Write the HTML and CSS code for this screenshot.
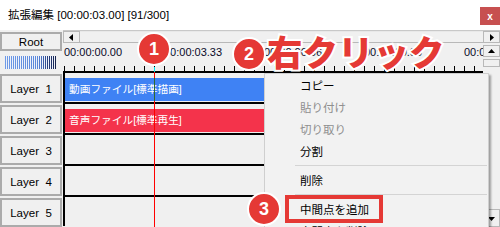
FILE: index.html
```html
<!DOCTYPE html>
<html lang="ja">
<head>
<meta charset="utf-8">
<title>拡張編集</title>
<link rel="stylesheet" href="styles.css">
</head>
<body>
<div class="win">
  <div class="titlebar">
    <span class="title">拡張編集 [00:00:03.00] [91/300]</span>
    <span class="close">x</span>
  </div>
  <div class="main">
    <div class="side">
      <div class="btn root">Root</div>
      <div class="vol"></div>
      <div class="btn layer">Layer&nbsp; 1</div>
      <div class="btn layer">Layer&nbsp; 2</div>
      <div class="btn layer">Layer&nbsp; 3</div>
      <div class="btn layer">Layer&nbsp; 4</div>
      <div class="btn layer">Layer&nbsp; 5</div>
    </div>
    <div class="tl">
      <div class="hscroll">
        <div class="sbtn"><svg width="5" height="7" viewBox="0 0 5 7"><polygon points="4,0 4,7 0,3.5" fill="#000"/></svg></div>
        <div class="hthumb"></div>
        <div class="sbtn"><svg width="5" height="7" viewBox="0 0 5 7"><polygon points="1,0 1,7 5,3.5" fill="#000"/></svg></div>
      </div>
      <div class="tlbody">
        <div class="tracks">
          <div class="ruler">
            <div class="labels">
              <span>00:00:00.00</span><span>00:00:03.33</span><span>00:00:06.66</span><span>00:00:10.00</span><span>00:00:13.33</span>
            </div>
            <div class="ticks"></div>
          </div>
          <div class="row"><div class="clip blue">動画ファイル[標準描画]</div></div>
          <div class="row"><div class="clip red">音声ファイル[標準再生]</div></div>
          <div class="row"></div>
          <div class="row"></div>
          <div class="row"></div>
        </div>
        <div class="vscroll">
          <div class="vbtn up"><svg width="7" height="5" viewBox="0 0 7 5"><polygon points="0,4 7,4 3.5,0" fill="#000"/></svg></div>
          <div class="vthumb"></div>
          <div class="vtrack"></div>
          <div class="vbtn down"><svg width="7" height="5" viewBox="0 0 7 5"><polygon points="0,1 7,1 3.5,5" fill="#000"/></svg></div>
        </div>
      </div>
    </div>
  </div>

  <div class="cursor"></div>

  <div class="menu">
    <div class="item">コピー</div>
    <div class="item dis">貼り付け</div>
    <div class="item dis">切り取り</div>
    <div class="item">分割</div>
    <div class="sep"></div>
    <div class="item">削除</div>
    <div class="sep"></div>
    <div class="item">中間点を追加</div>
    <div class="item">中間点を削除</div>
  </div>

  <div class="hl"></div>
  <div class="big">右クリック</div>
  <div class="badge b1">1</div>
  <div class="badge b2">2</div>
  <div class="badge b3">3</div>
</div>
</body>
</html>
```
FILE: styles.css
```css
* { box-sizing: border-box; margin: 0; padding: 0; }
body {
  margin: 0;
  width: 500px;
  height: 227px;
  overflow: hidden;
  background: #fff;
  font-family: "Liberation Sans", "Noto Sans CJK JP", sans-serif;
  font-size: 11px;
  color: #000;
}
.win { position: relative; width: 500px; height: 227px; overflow: hidden; }

.titlebar {
  height: 30px;
  display: flex;
  justify-content: space-between;
  align-items: flex-start;
  background: #fff;
}
.title { padding-left: 8px; line-height: 30px; font-size: 11.5px; }
.close {
  width: 20px; height: 18px; margin-top: 7px;
  background: #c75050; color: #fff;
  font-size: 10px; font-weight: bold;
  display: flex; align-items: center; justify-content: center;
}

.main { display: flex; height: 197px; background: #f0f0f0; }

.side { width: 63px; padding-top: 2px; display: flex; flex-direction: column; }
.btn {
  width: 62px;
  background: #f0f0f0;
  border: 2px solid #ababab;
  display: flex; align-items: center; justify-content: center;
  white-space: nowrap;
  font-size: 11.5px;
}
.root { height: 19px; }
.vol {
  margin: 5px 0 0 5px;
  width: 51px; height: 13px;
  background:
    repeating-linear-gradient(90deg, transparent 0 1px, #eef2fa 1px 2px),
    linear-gradient(90deg, #6f9ae6 0%, #5a86d8 65%, #2a4488 82%, #16224a 100%);
}
.layer { height: 29px; margin-top: 2px; }
.vol + .layer { margin-top: 5px; }

.tl { flex: 1; display: flex; flex-direction: column; min-width: 0; }
.hscroll { height: 13px; display: flex; border-top: 1px solid #c8c8c8; }
.sbtn {
  width: 17px; height: 12px;
  border: 1px solid #b8b8b8;
  background: #f0f0f0;
  display: flex; align-items: center; justify-content: center;
}
.hthumb { flex: 1; border-bottom: 1px solid #b8b8b8; border-top: 1px solid #e8e8e8; }

.tlbody { flex: 1; display: flex; min-height: 0; }
.tracks { flex: 1; min-width: 0; overflow: hidden; }
.ruler { height: 28px; display: flex; flex-direction: column; justify-content: space-between; overflow: hidden; }
.labels { display: flex; padding-left: 1px; padding-top: 3px; line-height: 13px; font-size: 11px; color: #0a0a28; white-space: nowrap; }
.labels span { flex: 0 0 100px; }
.ticks {
  height: 5px;
  margin-left: 1px;
  background: repeating-linear-gradient(90deg, #000 0 1px, transparent 1px 10px);
}
.row { height: 31px; border-top: 2px solid #000; border-left: 2px solid #000; }
.clip {
  margin-top: 5px; height: 23px; width: 220px;
  padding-left: 4px;
  line-height: 23px;
  color: #fff;
  font-size: 10.7px;
  white-space: nowrap;
}
.blue { background: #3f82f4; }
.red { background: #f4334b; }

.vscroll { width: 17px; display: flex; flex-direction: column; }
.vbtn {
  height: 12px;
  border: 1px solid #b8b8b8;
  background: #f0f0f0;
  display: flex; align-items: center; justify-content: center;
}
.up { margin-top: 2px; }
.vthumb { height: 8px; margin-top: 2px; border: 1px solid #b8b8b8; }
.vtrack { flex: 1; }
.down { height: 18px; }

.cursor {
  position: absolute;
  left: 154px; top: 67px;
  width: 1px; height: 160px;
  background: linear-gradient(#00e5ee 0 5px, #f00 5px 11px, #2f6a2f 11px 34px, #f00 34px);
}

.menu {
  position: absolute;
  left: 264px; top: 73px;
  width: 225px; height: 180px;
  background: #f2f2f2;
  border: 1px solid #cfcfcf;
  box-shadow: 2px 2px 2px rgba(0, 0, 0, 0.35);
  font-family: "Noto Sans CJK JP", sans-serif;
  font-size: 11.5px;
}
.item { height: 22px; line-height: 22px; padding-left: 35px; }
.dis { color: #8f8f8f; }
.sep { height: 7px; margin: 0 1px 0 30px; display: flex; align-items: center; }
.sep::after { content: ""; flex: 1; height: 1px; background: #d4d4d4; }

.hl {
  position: absolute;
  left: 285px; top: 195px;
  width: 98px; height: 28px;
  border: 4px solid #e53935;
}

.big {
  position: absolute;
  left: 267px; top: 33px;
  font-family: "Noto Sans CJK JP", sans-serif;
  font-weight: 900;
  font-size: 35.5px;
  line-height: 35px;
  color: #e53935;
  -webkit-text-stroke: 4px #fff;
  paint-order: stroke fill;
  white-space: nowrap;
}

.badge {
  position: absolute;
  width: 34px; height: 34px;
  border-radius: 50%;
  background: #e53935;
  border: 2px solid #fff;
  color: #fff;
  font-family: "Liberation Sans", sans-serif;
  font-weight: bold;
  font-size: 18px;
  display: flex; align-items: center; justify-content: center;
}
.b1 { left: 137px; top: 32px; }
.b2 { left: 232px; top: 37px; }
.b3 { left: 247px; top: 192px; }
```
